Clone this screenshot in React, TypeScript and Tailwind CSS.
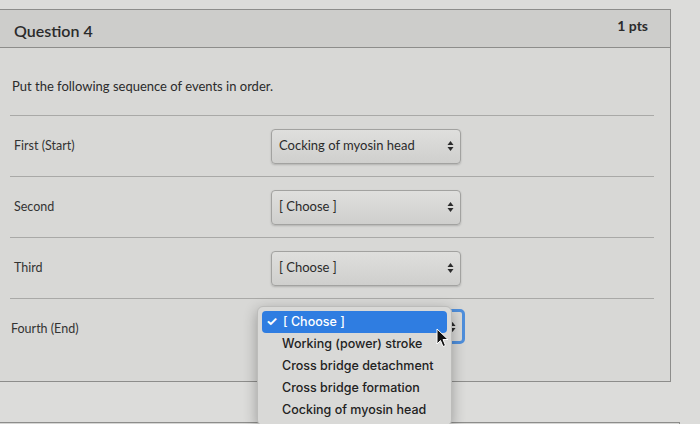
import React from "react";

function Arrows() {
  return (
    <svg className="absolute right-[6px] top-1/2 -translate-y-1/2" width="7" height="11" viewBox="0 0 7 11">
      <path d="M3.5 0.5 L6.5 4.5 L0.5 4.5 Z" fill="#2b2b2b" />
      <path d="M3.5 10.5 L6.5 6.5 L0.5 6.5 Z" fill="#2b2b2b" />
    </svg>
  );
}

function Select({ value, focused }: { value: string; focused?: boolean }) {
  return (
    <div
      className={
        focused
          ? "relative flex h-[35px] w-[194px] items-center rounded-[5px] border-[3px] border-[#4f8fdc] bg-[#d9d9d7] pl-[7px] text-[13px] text-[#2b2b2b]"
          : "relative flex h-[35px] w-[190px] items-center rounded-[4px] border border-[#a2a2a0] bg-linear-to-b from-[#dfdfdd] to-[#cfcfcd] pl-[7px] text-[13px] text-[#2b2b2b] shadow-[0_1px_2px_rgba(0,0,0,0.18)]"
      }
    >
      {value}
      <Arrows />
    </div>
  );
}

function Row({ label, value, last, focused }: { label: string; value: string; last?: boolean; focused?: boolean }) {
  return (
    <div
      className={
        last
          ? "flex items-start border-t border-[#a9a9a7] pt-[10px] pb-[32px]"
          : "flex h-[61px] items-center border-t border-[#a9a9a7]"
      }
    >
      <div className={last ? "flex h-[40px] w-[261px] items-center pl-[1px] text-[12.5px] text-[#333]" : "w-[261px] pl-[4px] text-[12.5px] text-[#333]"}>
        {label}
      </div>
      <Select value={value} focused={focused} />
    </div>
  );
}

export default function App() {
  const options = ["Working (power) stroke", "Cross bridge detachment", "Cross bridge formation", "Cocking of myosin head"];

  return (
    <div className="relative h-[424px] w-[700px] overflow-hidden bg-[#dcdcda] font-['Lato','Liberation_Sans',sans-serif]">
      <div className="pt-[9px]">
        <div className="w-[671px] border-y border-r border-[#8d8d8b] bg-[#d8d8d6]">
          <div className="flex h-[38px] items-center justify-between border-b border-[#8d8d8b] bg-[#cdcdcb] pl-[14px] pr-[22px]">
            <span className="mt-[4px] text-[16px] font-semibold text-[#2b2b2b]">Question 4</span>
            <span className="-mt-[6px] text-[14px] font-bold text-[#2b2b2b]">1 pts</span>
          </div>
          <div className="pt-[30px]">
            <p className="pl-[12px] text-[13px] leading-[16px] text-[#2b2b2b]">Put the following sequence of events in order.</p>
            <div className="ml-[10px] mr-[16px] mt-[21px]">
              <Row label="First (Start)" value="Cocking of myosin head" />
              <Row label="Second" value="[ Choose ]" />
              <Row label="Third" value="[ Choose ]" />
              {/* select value is hidden under the open menu */}
              <Row label="Fourth (End)" value="" last focused />
            </div>
          </div>
        </div>
        <div className="mt-[40px] h-[20px] w-[680px] border-t border-r border-[#8d8d8b] bg-[#d6d6d4]" />
      </div>

      <div className="absolute left-[257px] top-[306px] w-[195px] rounded-[6px] border border-[#bcbcba] bg-[#d9d9d7] px-[4px] py-[4px] font-['Inter','Liberation_Sans',sans-serif] text-[12.5px] font-medium text-[#222] shadow-[0_4px_14px_rgba(0,0,0,0.3)]">
        <div className="relative flex h-[22px] items-center rounded-[4px] bg-[#2f7de1] pl-[21px] text-white">
          <span className="absolute left-[4px] text-[13px] font-bold">✓</span>
          [ Choose ]
        </div>
        {options.map((o) => (
          <div key={o} className="flex h-[22px] items-center pl-[20px]">
            {o}
          </div>
        ))}
      </div>

      <svg className="absolute left-[436px] top-[328px]" width="13" height="20" viewBox="0 0 13 20">
        <path d="M1 1 L1 16 L4.5 12.5 L7 18.5 L9.5 17.5 L7 11.5 L12 11.5 Z" fill="#111" stroke="#fff" strokeWidth="1" />
      </svg>
    </div>
  );
}
